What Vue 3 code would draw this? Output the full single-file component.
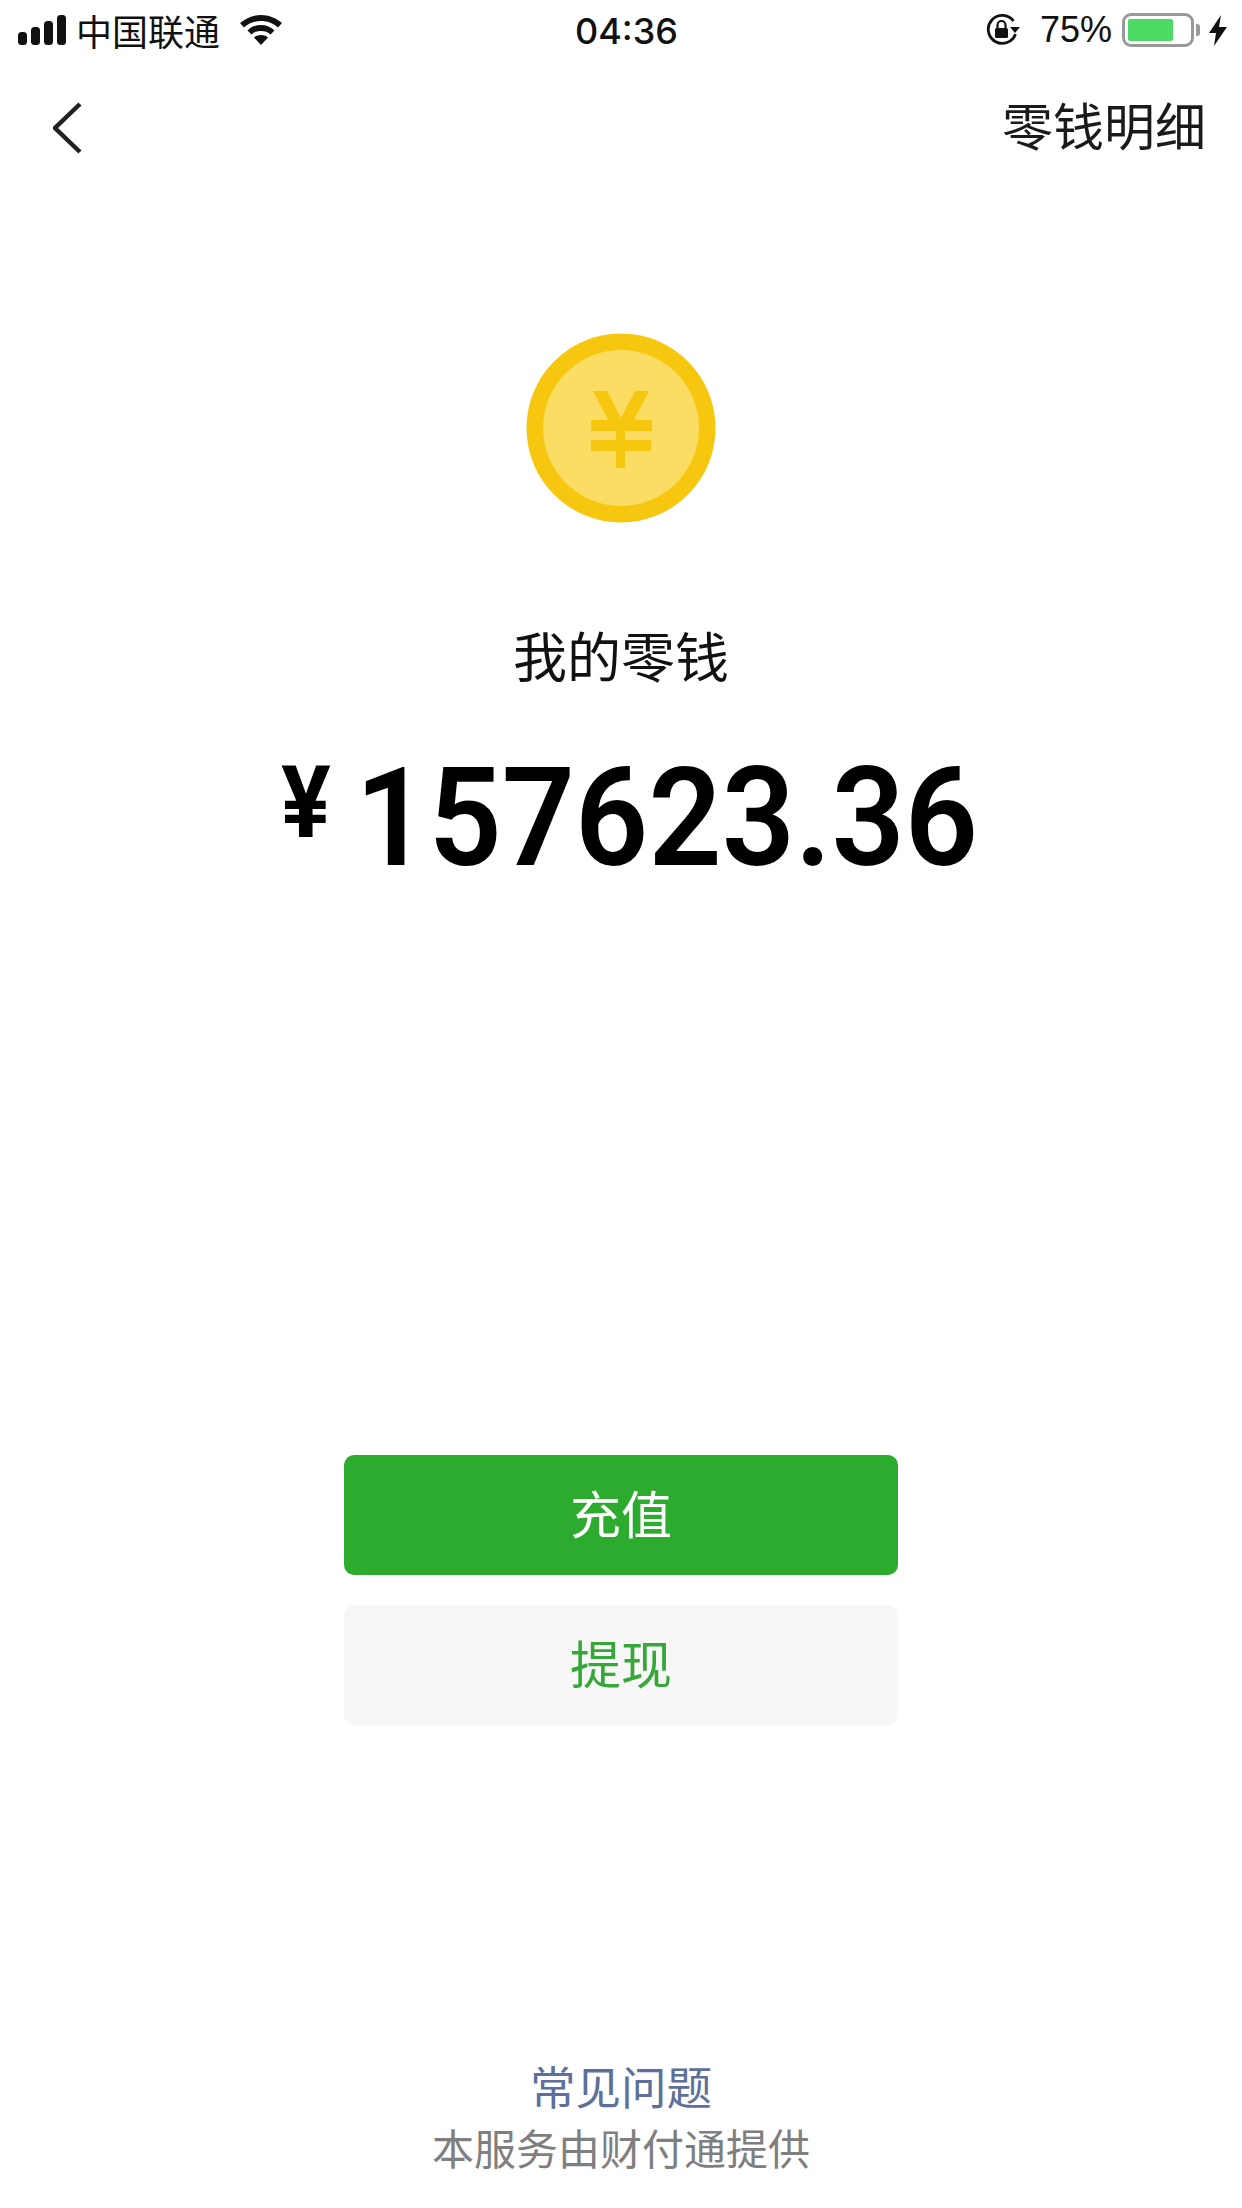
<template>
  <div class="page">
    <div class="status">
      <div class="status-left">
        <svg class="signal" width="48" height="30" viewBox="0 0 48 30">
          <rect x="0" y="17" width="9" height="13" rx="3.500" />
          <rect x="13" y="12" width="9" height="18" rx="3.500" />
          <rect x="26" y="6" width="9" height="24" rx="3.500" />
          <rect x="39" y="0" width="9" height="30" rx="3.500" />
        </svg>
        <span class="carrier">中国联通</span>
        <svg class="wifi" width="42" height="30" viewBox="0 0 42 30">
          <path d="M21 0C13 0 6 3 0 8l4 4.500C9 8 15 6 21 6s12 2 17 6.500L42 8C36 3 29 0 21 0z" />
          <path d="M21 10c-5.500 0-10 2-13.500 5.500l4 4C14 17 17 16 21 16s7 1 9.500 3.500l4-4C31 12 26.500 10 21 10z" />
          <path d="M21 20c-3 0-5.500 1-7 2.500L21 30l7-7.500C26.500 21 24 20 21 20z" />
        </svg>
      </div>
      <span class="clock">04:36</span>
      <div class="status-right">
        <svg class="lock" width="36" height="32" viewBox="0 0 36 32">
          <path d="M29.500 20A14 14 0 1 1 27.500 7" fill="none" stroke="#111" stroke-width="2.800" />
          <path d="M24 13h10l-5 6z" fill="#111" />
          <rect x="9" y="14" width="13" height="10" rx="1.500" fill="#111" />
          <path d="M11.500 14v-3a4 4 0 0 1 8 0v3" fill="none" stroke="#111" stroke-width="2.200" />
        </svg>
        <span class="percent">75%</span>
        <div class="battery"><div class="battery-fill" :style="{ width: level + '%' }"></div></div>
        <div class="battery-tip"></div>
        <svg class="bolt" width="18" height="31" viewBox="0 0 18 31">
          <path d="M12 0L0 18h7L5 31 18 12h-8z" fill="#111" />
        </svg>
      </div>
    </div>

    <div class="nav">
      <svg class="back" width="30" height="54" viewBox="0 0 30 54">
        <path d="M27 3L2 27l25 24" fill="none" stroke="#222" stroke-width="4.500" />
      </svg>
      <span class="nav-title">零钱明细</span>
    </div>

    <svg class="coin" width="190" height="190" viewBox="0 0 190 190">
      <circle cx="95" cy="95" r="94.500" fill="#f7c60f" />
      <circle cx="95" cy="95" r="78" fill="#fcdd63" />
      <path
        d="M67 58h14l14 27 14-27h14l-15 29h18v11H99v9h26v11H99v17H90v-17H65v-11h25v-9H65V87h17z"
        fill="#f7c60f"
      />
    </svg>

    <div class="label">我的零钱</div>

    <div class="amount">
      <span class="currency">¥</span>
      <span class="value">157623.36</span>
    </div>

    <div class="actions">
      <button class="btn primary" type="button">充值</button>
      <button class="btn secondary" type="button">提现</button>
    </div>

    <div class="footer">
      <div class="faq">常见问题</div>
      <div class="provider">本服务由财付通提供</div>
    </div>
  </div>
</template>

<script setup>
const level = 75
</script>

<style>
body {
  background: #fff;
}
</style>

<style scoped>
.page {
  width: 1242px;
  height: 2208px;
  background: #fff;
  display: flex;
  flex-direction: column;
  align-items: center;
  overflow: hidden;
  font-family: "Noto Sans CJK SC", "Liberation Sans", sans-serif;
  color: #111;
}

.status {
  width: 100%;
  height: 60px;
  box-sizing: border-box;
  padding: 0 15px 0 18px;
  display: grid;
  grid-template-columns: 1fr auto 1fr;
  align-items: center;
}
.status-left,
.status-right {
  display: flex;
  align-items: center;
}
.status-right {
  justify-content: flex-end;
}
.signal {
  fill: #111;
}
.carrier {
  margin-left: 10px;
  font-size: 36px;
  line-height: 60px;
}
.wifi {
  margin-left: 20px;
  fill: #111;
}
.clock {
  font-family: Inter, sans-serif;
  font-size: 36px;
  font-weight: 500;
  transform: translate(4px, 1px);
}
.percent {
  margin-left: 18px;
  font-family: "Liberation Sans", sans-serif;
  font-size: 36px;
}
.battery {
  margin-left: 10px;
  width: 72px;
  height: 34px;
  box-sizing: border-box;
  border: 3px solid #999;
  border-radius: 9px;
  padding: 3px;
}
.battery-fill {
  height: 100%;
  background: #4cd964;
  border-radius: 2px;
}
.battery-tip {
  width: 4px;
  height: 12px;
  margin-left: 2px;
  background: #999;
  border-radius: 0 3px 3px 0;
}
.bolt {
  margin-left: 9px;
}

.nav {
  width: 100%;
  height: 134px;
  box-sizing: border-box;
  padding: 0 36px 0 53px;
  display: flex;
  align-items: center;
  justify-content: space-between;
}
.back {
  margin-top: 2px;
}
.nav-title {
  font-size: 51px;
  color: #1a1a1a;
  margin-bottom: 6px;
}

.coin {
  margin-top: 139px;
}
.label {
  margin-top: 92px;
  font-size: 54px;
  line-height: 80px;
  color: #111;
}
.amount {
  margin-top: 48px;
  display: flex;
  align-items: flex-start;
  font-family: Roboto, sans-serif;
  font-weight: 600;
  color: #000;
  height: 150px;
  transform: translateX(7px) scaleX(0.93);
}
.currency {
  font-size: 100px;
  line-height: 120px;
  font-weight: 700;
  transform: translateX(4px);
}
.value {
  font-size: 138px;
  line-height: 150px;
  margin-left: 30px;
}

.actions {
  margin-top: 562px;
  display: flex;
  flex-direction: column;
  gap: 30px;
}
.btn {
  width: 554px;
  height: 120px;
  border: none;
  border-radius: 10px;
  padding: 0 0 6px;
  font-family: inherit;
  font-size: 51px;
}
.primary {
  background: #2dab2e;
  color: #fff;
}
.secondary {
  background: #f7f7f7;
  color: #37a73a;
}

.footer {
  margin-top: auto;
  padding-bottom: 30px;
  text-align: center;
}
.faq {
  font-size: 45.500px;
  line-height: 62px;
  color: #5d6f9a;
}
.provider {
  font-size: 42px;
  line-height: 62px;
  color: #7f7f7f;
}
</style>
